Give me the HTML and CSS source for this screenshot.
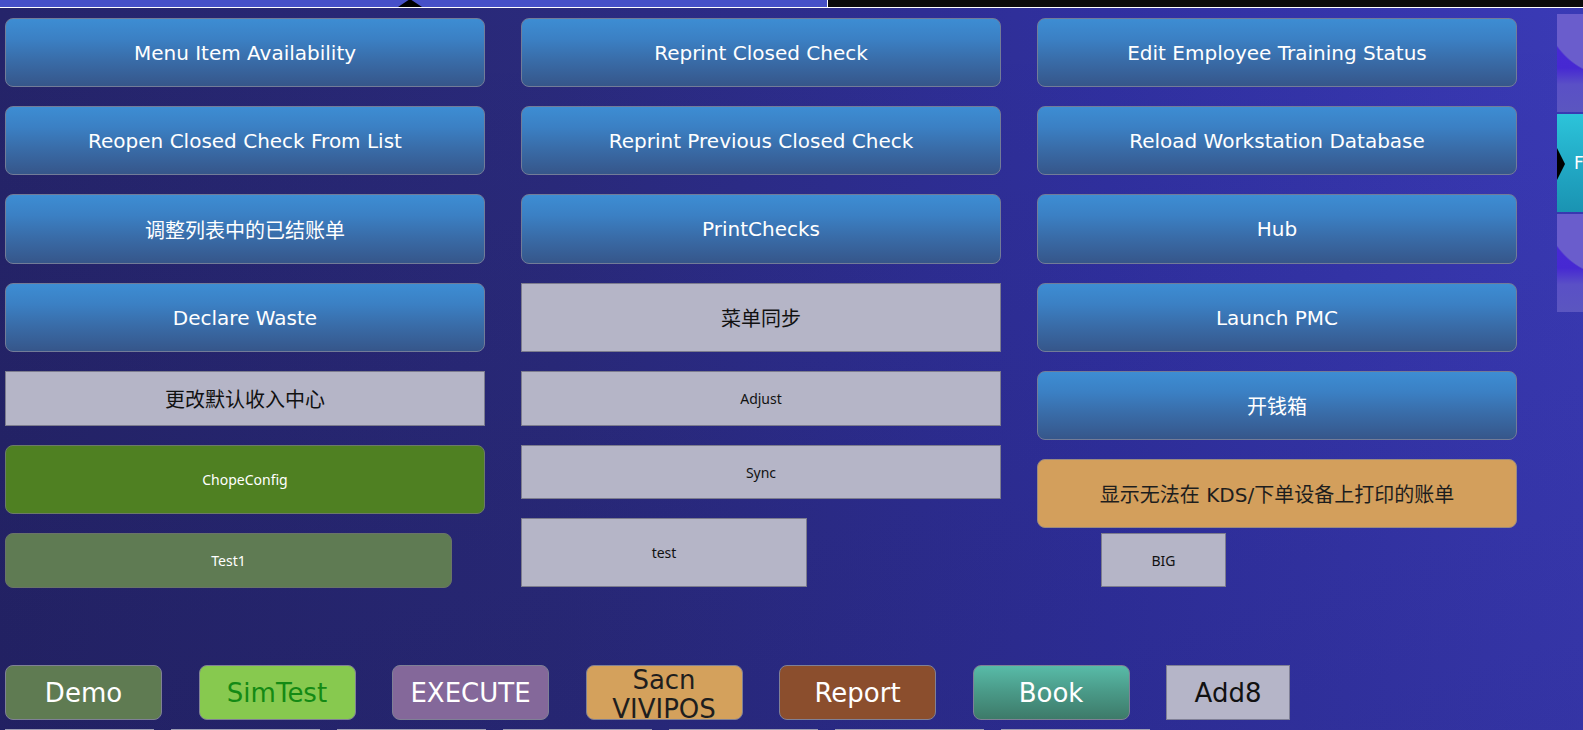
FILE: index.html
```html
<!DOCTYPE html>
<html lang="zh">
<head>
<meta charset="utf-8">
<title>POS Functions</title>
<link rel="stylesheet" href="styles.css">
</head>
<body>
<div class="screen">
  <div class="topbar">
    <div class="tb-left"></div>
    <div class="tb-right"></div>
    <div class="tb-notch"></div>
  </div>
  <div class="main">
    <div class="col">
      <div class="btn blue h69">Menu Item Availability</div>
      <div class="btn blue h69">Reopen Closed Check From List</div>
      <div class="btn blue h70">调整列表中的已结账单</div>
      <div class="btn blue h69">Declare Waste</div>
      <div class="btn grey h55 big-cjk">更改默认收入中心</div>
      <div class="btn green h69 small-white">ChopeConfig</div>
      <div class="btn olive h55 small-white w447">Test1</div>
    </div>
    <div class="col">
      <div class="btn blue h69">Reprint Closed Check</div>
      <div class="btn blue h69">Reprint Previous Closed Check</div>
      <div class="btn blue h70">PrintChecks</div>
      <div class="btn grey h69 big-cjk">菜单同步</div>
      <div class="btn grey h55 small-dark">Adjust</div>
      <div class="btn grey h54 small-dark">Sync</div>
      <div class="btn grey h69 small-dark w286">test</div>
    </div>
    <div class="col col3">
      <div class="btn blue h69">Edit Employee Training Status</div>
      <div class="btn blue h69">Reload Workstation Database</div>
      <div class="btn blue h70">Hub</div>
      <div class="btn blue h69">Launch PMC</div>
      <div class="btn blue h69">开钱箱</div>
      <div class="btn tan h69 dark-text">显示无法在 KDS/下单设备上打印的账单</div>
      <div class="btn grey h54 small-dark big-btn">BIG</div>
    </div>
    <div class="side">
      <div class="tile purple"></div>
      <div class="tile cyan"><span class="arrow"></span><span class="tile-label">F</span></div>
      <div class="tile purple"></div>
    </div>
  </div>
  <div class="dock">
    <div class="dk demo">Demo</div>
    <div class="dk simtest">SimTest</div>
    <div class="dk execute">EXECUTE</div>
    <div class="dk sacn">Sacn<br>VIVIPOS</div>
    <div class="dk report">Report</div>
    <div class="dk book">Book</div>
    <div class="dk add8">Add8</div>
  </div>
  <div class="dock2">
    <span></span><span></span><span></span><span></span><span></span><span></span><span></span>
  </div>
</div>
</body>
</html>
```

FILE: styles.css
```css
html, body {
  margin: 0;
  padding: 0;
}

body {
  width: 1583px;
  height: 730px;
  overflow: hidden;
  font-family: "DejaVu Sans", "Noto Sans CJK SC", sans-serif;
}

.screen {
  width: 1583px;
  height: 730px;
  display: flex;
  flex-direction: column;
  overflow: hidden;
  background:
    linear-gradient(to bottom, rgba(10, 10, 40, 0) 0%, rgba(10, 10, 40, 0.12) 100%),
    linear-gradient(to right, #25246a 0%, #2a2a7c 35%, #3030a0 70%, #3a3ab6 100%);
}

/* top bar */
.topbar {
  position: relative;
  height: 7px;
  display: flex;
  border-bottom: 1px solid #ffffff;
  flex: none;
}

.tb-left {
  width: 827px;
  background: #4650c8;
}

.tb-right {
  flex: 1;
  background: #0b0b0b;
  border-left: 1px solid #ffffff;
}

.tb-notch {
  position: absolute;
  left: 398px;
  bottom: 0;
  width: 0;
  height: 0;
  border-left: 12px solid transparent;
  border-right: 12px solid transparent;
  border-bottom: 8px solid #000;
}

/* main area */
.main {
  flex: 1;
  display: flex;
  gap: 36px;
  padding: 6px 0 0 5px;
  min-height: 0;
}

.col {
  width: 480px;
  flex: none;
  display: flex;
  flex-direction: column;
  gap: 19px;
  padding-top: 4px;
}

.btn {
  box-sizing: border-box;
  display: flex;
  align-items: center;
  justify-content: center;
  text-align: center;
  flex: none;
}

.h69 { height: 69px; }
.h70 { height: 70px; }
.h55 { height: 55px; }
.h54 { height: 54px; }

.w447 { width: 447px; }
.w286 { width: 286px; }

.blue {
  border: 1px solid #727c98;
  border-radius: 8px;
  background: linear-gradient(to bottom, #3d8dd3 0%, #3b80c4 30%, #396ca8 62%, #36568a 100%);
  color: #ffffff;
  font-size: 20px;
}

.grey {
  border: 1px solid #7c7c8e;
  background: #b5b5c7;
  color: #111111;
}

.big-cjk {
  font-size: 20px;
}

.small-dark {
  font-family: "Noto Sans", "DejaVu Sans", sans-serif;
  font-size: 14px;
  color: #111111;
}

.small-white {
  font-family: "Noto Sans", "DejaVu Sans", sans-serif;
  font-size: 14px;
  color: #ffffff;
}

.green {
  border: 1px solid #6c7a6a;
  border-radius: 8px;
  background: #4f8022;
}

.olive {
  border: 1px solid #6a7468;
  border-radius: 8px;
  background: #5f7b53;
}

.tan {
  border: 1px solid #9a8a80;
  border-radius: 8px;
  background: #d39f5c;
}

.dark-text {
  color: #1e1e1e;
  font-size: 20px;
}

.big-btn {
  width: 125px;
  margin-left: 64px;
  margin-top: -14px;
}

/* right side tiles */
.side {
  margin-left: 4px;
  width: 80px;
  flex: none;
  display: flex;
  flex-direction: column;
  gap: 2px;
}

.tile {
  position: relative;
  height: 98px;
  overflow: hidden;
  flex: none;
}

.purple {
  background:
    radial-gradient(circle 74px at 60px -10px, #6a5dcc 98%, rgba(106, 93, 204, 0) 100%),
    linear-gradient(to bottom, #4a2cd6 0%, #4628d2 55%, #5a50c6 72%, #5b56c0 100%);
}

.cyan {
  background: linear-gradient(to bottom, #2cc4da 0%, #22aac6 50%, #1a93b2 100%);
}

.arrow {
  position: absolute;
  left: 0;
  top: 34px;
  width: 0;
  height: 0;
  border-top: 16px solid transparent;
  border-bottom: 16px solid transparent;
  border-left: 8px solid #000;
}

.tile-label {
  position: absolute;
  left: 17px;
  top: 38px;
  color: #ffffff;
  font-size: 17px;
  line-height: 22px;
}

/* dock */
.dock {
  flex: none;
  height: 55px;
  display: flex;
  gap: 36.5px;
  padding-left: 5px;
}

.dk {
  box-sizing: border-box;
  width: 157px;
  height: 55px;
  flex: none;
  display: flex;
  align-items: center;
  justify-content: center;
  text-align: center;
  font-size: 26px;
  border: 1px solid #7f8096;
  border-radius: 8px;
  color: #ffffff;
  overflow: hidden;
}

.demo { background: #5f7b52; }

.simtest {
  background: #87c94f;
  color: #148a14;
}

.execute { background: #84689a; }

.sacn {
  background: #d4a15c;
  color: #1e1e1e;
  align-items: flex-start;
  line-height: 29px;
}

.report { background: #8b4e2d; }

.book {
  background: linear-gradient(to bottom, #58bba8 0%, #4b9c8a 45%, #3d7a69 100%);
}

.add8 {
  width: 124px;
  border-radius: 0;
  background: #b5b5c8;
  color: #111111;
}

.dock2 {
  flex: none;
  height: 1px;
  margin-top: 9px;
  display: flex;
  gap: 17px;
  padding-left: 5px;
}

.dock2 span {
  width: 149px;
  height: 1px;
  background: #9c9cb2;
  flex: none;
}
```
